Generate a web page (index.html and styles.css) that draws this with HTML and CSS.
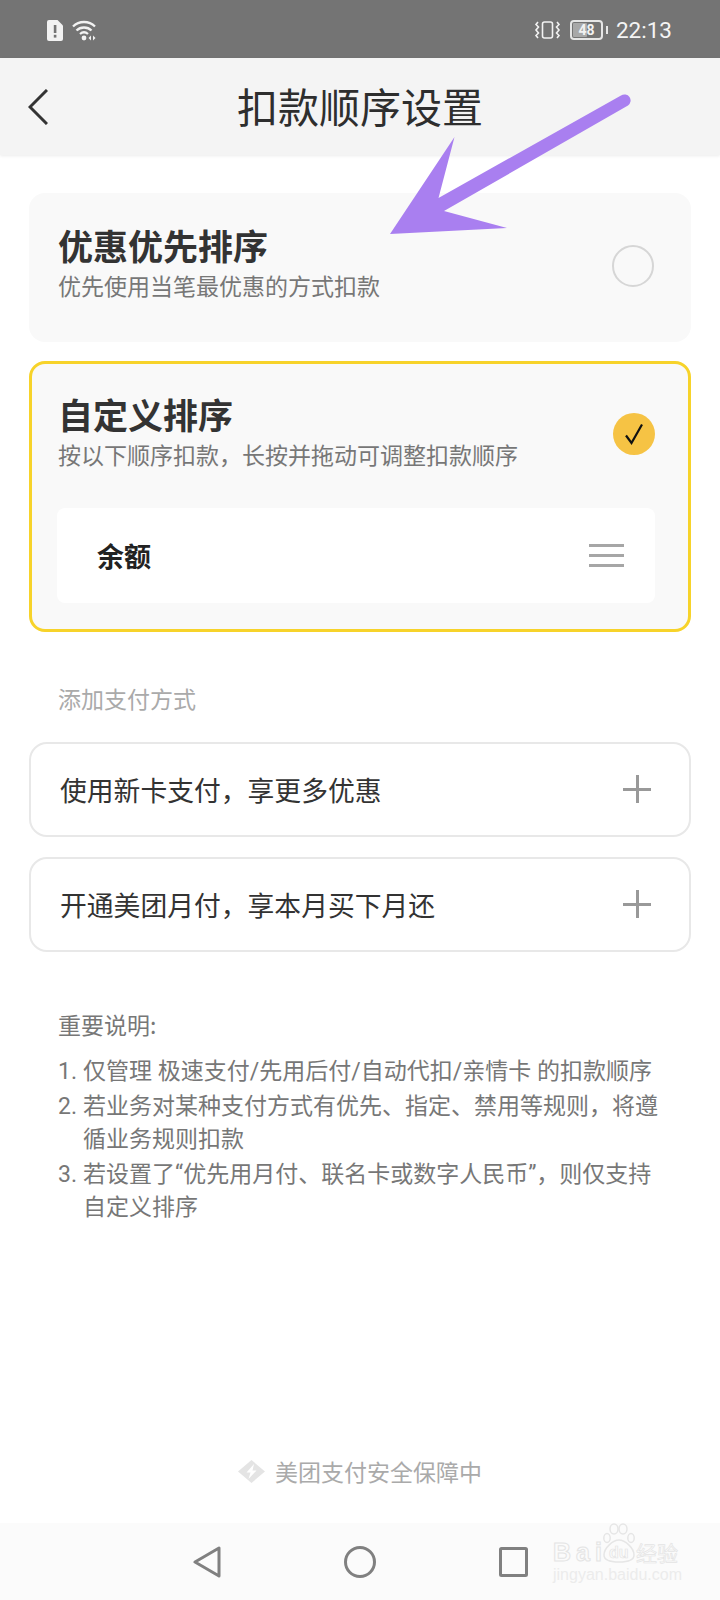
FILE: index.html
```html
<!DOCTYPE html>
<html lang="zh-CN">
<head>
<meta charset="utf-8">
<title>扣款顺序设置</title>
<link rel="stylesheet" href="styles.css">
</head>
<body>
<div class="page">
  <div class="status">
    <div class="status-group">
      <svg class="ic-sim" viewBox="0 0 16 21"><path d="M2 0H10.500L16 5.500V19A2 2 0 0 1 14 21H2A2 2 0 0 1 0 19V2A2 2 0 0 1 2 0Z" fill="#f2f2f2"/><rect x="6.800" y="5" width="2.600" height="8" fill="#747474"/><rect x="6.800" y="14.800" width="2.600" height="2.800" fill="#747474"/></svg>
      <svg class="ic-wifi" viewBox="0 0 25 22" fill="none" stroke="#f2f2f2" stroke-width="2.300"><path d="M1 7.500C7 1.500 17 1.500 23 7.500"/><path d="M4.500 11.500C8.500 7.500 15.500 7.500 19.500 11.500"/><path d="M8 15C10.500 12.800 13.500 12.800 16 15"/><circle cx="12" cy="19" r="2.400" fill="#f2f2f2" stroke="none"/><path d="M19 16.500L16.500 19L19 21.500Z" fill="#f2f2f2" stroke="none"/><path d="M21 16.500L23.500 19L21 21.500Z" fill="#f2f2f2" stroke="none"/></svg>
    </div>
    <div class="status-group status-right">
      <svg class="ic-vib" viewBox="0 0 27 18" fill="none" stroke="#f2f2f2" stroke-width="1.600"><rect x="8.500" y="1" width="10" height="16" rx="2"/><path d="M4 1L2 3.500L4.500 6L2 9L4.500 12L2 14.500L4 17"/><path d="M23 1L25 3.500L22.500 6L25 9L22.500 12L25 14.500L23 17"/></svg>
      <div class="battery"><div class="battery-body"><span class="battery-fill"></span><span class="battery-num">48</span></div><span class="battery-tip"></span></div>
      <span class="time">22:13</span>
    </div>
  </div>

  <header class="header">
    <svg class="back" viewBox="0 0 20 36" fill="none" stroke="#333" stroke-width="3"><path d="M19 1L2 18L19 35"/></svg>
    <h1 class="title">扣款顺序设置</h1>
  </header>

  <main class="main">
    <section class="card card-plain">
      <div class="card-head">
        <div>
          <div class="card-title">优惠优先排序</div>
          <div class="card-sub">优先使用当笔最优惠的方式扣款</div>
        </div>
        <span class="radio"></span>
      </div>
    </section>

    <section class="card card-active">
      <div class="card-head">
        <div>
          <div class="card-title">自定义排序</div>
          <div class="card-sub">按以下顺序扣款，长按并拖动可调整扣款顺序</div>
        </div>
        <span class="radio-on"><svg viewBox="0 0 24 24" fill="none" stroke="#111" stroke-width="2.200"><path d="M4 13.500L9.500 21L20 2.500"/></svg></span>
      </div>
      <div class="pay-item">
        <span class="pay-name">余额</span>
        <span class="handle"><i></i><i></i><i></i></span>
      </div>
    </section>

    <div class="add-label">添加支付方式</div>
    <div class="add-row"><span>使用新卡支付，享更多优惠</span><span class="plus"></span></div>
    <div class="add-row"><span>开通美团月付，享本月买下月还</span><span class="plus"></span></div>

    <div class="notes">
      <div class="notes-title">重要说明:</div>
      <ol class="notes-list">
        <li><span class="num">1.</span><span>仅管理 极速支付/先用后付/自动代扣/亲情卡 的扣款顺序</span></li>
        <li><span class="num">2.</span><span>若业务对某种支付方式有优先、指定、禁用等规则，将遵循业务规则扣款</span></li>
        <li><span class="num">3.</span><span>若设置了“优先用月付、联名卡或数字人民币”，则仅支持自定义排序</span></li>
      </ol>
    </div>
  </main>

  <div class="secure">
    <svg class="shield" viewBox="0 0 27 23"><path d="M13.500 0L27 11.500L13.500 23L0 11.500Z" fill="#e4e4e4"/><path d="M16 4L8.500 12.500H12.500L10.500 19L18.500 10.500H14.500Z" fill="#fff"/></svg>
    <span>美团支付安全保障中</span>
  </div>

  <nav class="nav">
    <svg class="nav-back" viewBox="0 0 28 32" fill="none" stroke="#808080" stroke-width="3" stroke-linejoin="round"><path d="M26 2V30L2 16Z"/></svg>
    <svg class="nav-home" viewBox="0 0 32 32" fill="none" stroke="#808080" stroke-width="3"><circle cx="16" cy="16" r="14.500"/></svg>
    <svg class="nav-recent" viewBox="0 0 29 30" fill="none" stroke="#808080" stroke-width="3" stroke-linejoin="round"><rect x="1.500" y="1.500" width="26" height="27" rx="1"/></svg>
    <div class="watermark">
      <svg class="paw" viewBox="0 0 32 40" fill="none" stroke="#e6e6e6" stroke-width="1.500"><ellipse cx="11" cy="6" rx="4" ry="5"/><ellipse cx="20" cy="6" rx="4" ry="5"/><ellipse cx="4" cy="15" rx="3.200" ry="4.500"/><ellipse cx="28" cy="15" rx="3.200" ry="4.500"/><path d="M16 17C22 17 31 25 31 32C31 38 24 39 16 39C8 39 1 38 1 32C1 25 10 17 16 17Z"/></svg>
      <span class="wm-bai">Bai</span>
      <span class="wm-du">du</span>
      <span class="wm-cn">经验</span>
      <span class="wm-url">jingyan.baidu.com</span>
    </div>
  </nav>

  <svg class="arrow" viewBox="0 0 720 1600"><path d="M390 234L454.500 137L438.500 198L621 95.500A6 6 0 0 1 628 105.500L444 211L507 228Z" fill="#a97ff0"/></svg>
</div>
</body>
</html>
```

FILE: styles.css
```css
* { box-sizing: border-box; }
html, body { margin: 0; padding: 0; background: #fff; }
body { font-family: "Noto Sans CJK SC", "Noto Sans", sans-serif; color: #333; }
.page { position: relative; width: 720px; height: 1600px; display: flex; flex-direction: column; overflow: hidden; }

.status { height: 58px; flex: none; background: #747474; display: flex; justify-content: space-between; align-items: center; padding: 2px 48px 0 47px; color: #f2f2f2; }
.status-group { display: flex; align-items: center; gap: 9px; }
.ic-sim { width: 16px; height: 21px; }
.ic-wifi { width: 25px; height: 22px; }
.ic-vib { width: 27px; height: 18px; }
.battery { display: flex; align-items: center; gap: 3px; }
.battery-body { position: relative; width: 33px; height: 20px; border: 2px solid #e6e6e6; border-radius: 4px; display: flex; align-items: center; justify-content: center; }
.battery-fill { position: absolute; left: 1px; top: 1px; bottom: 1px; width: 14px; background: #a8a8a8; border-radius: 1px; }
.battery-num { position: relative; font: 700 14px/16px "Roboto", sans-serif; color: #f2f2f2; }
.battery-tip { width: 2px; height: 8px; background: #e6e6e6; }
.time { font: 400 22.500px/28px "Roboto", sans-serif; margin-left: -1px; color: #f4f4f4; }

.header { position: relative; height: 97px; flex: none; background: #f4f4f4; display: flex; align-items: center; justify-content: center; box-shadow: 0 1px 3px rgba(0,0,0,.08); z-index: 1; }
.back { position: absolute; left: 28px; top: 31px; width: 20px; height: 36px; }
.title { margin: 0 0 3px; font-size: 41px; line-height: 52px; font-weight: 400; color: #2e2e2e; }

.main { padding: 38px 29px 0; }
.card { border-radius: 16px; background: #f9f9f9; }
.card-plain { height: 149px; padding: 32px 37px 0 29px; }
.card-active { height: 271px; margin-top: 19px; padding: 30px 33px 0 25px; border: 3px solid #f7d32a; }
.card-head { display: flex; justify-content: space-between; align-items: center; }
.card-active .card-head { padding-left: 1px; }
.card-title { font-size: 35px; line-height: 40px; font-weight: 700; color: #333; }
.card-sub { margin-top: 5px; font-size: 23px; line-height: 30px; color: #777; }
.radio { width: 42px; height: 42px; border: 2px solid #d6d6d6; border-radius: 50%; margin-top: 6px; }
.radio-on { width: 42px; height: 42px; border-radius: 50%; background: #f6c344; display: flex; align-items: center; justify-content: center; margin-top: 4px; }
.radio-on svg { width: 24px; height: 24px; }
.pay-item { height: 95px; margin-top: 39px; background: #fff; border-radius: 8px; display: flex; align-items: center; justify-content: space-between; padding: 0 31px 0 40px; }
.pay-name { font-size: 27px; line-height: 36px; font-weight: 700; color: #222; }
.handle { width: 35px; display: flex; flex-direction: column; gap: 7px; }
.handle i { display: block; height: 3px; background: #a6a6a6; }

.add-label { margin-top: 51px; padding-left: 29px; font-size: 23px; line-height: 30px; color: #aaa; }
.add-row { height: 95px; margin-top: 20px; padding: 1px 38px 0 29px; border: 2px solid #e8e8e8; border-radius: 18px; display: flex; align-items: center; justify-content: space-between; font-size: 26.800px; line-height: 36px; color: #333; }
.add-label + .add-row { margin-top: 29px; }
.plus { position: relative; width: 28px; height: 28px; margin-top: -2px; }
.plus::before, .plus::after { content: ""; position: absolute; background: #999; }
.plus::before { left: 0; right: 0; top: 12.500px; height: 3px; }
.plus::after { top: 0; bottom: 0; left: 12.500px; width: 3px; }

.notes { margin-top: 57px; padding-left: 29px; color: #777; font-size: 23px; }
.notes-title { line-height: 30px; }
.notes-list { list-style: none; margin: 16px 0 0; padding: 0; display: flex; flex-direction: column; gap: 2px; font-family: "Roboto", "Noto Sans CJK SC", sans-serif; }
.notes-list li { display: flex; line-height: 33px; width: 604px; }
.num { flex: none; width: 25px; }

.secure { margin-top: auto; height: 100px; padding-bottom: 4px; flex: none; display: flex; align-items: center; justify-content: center; gap: 10px; font-size: 23px; color: #aaa; }
.shield { width: 27px; height: 23px; }

.nav { position: relative; height: 77px; flex: none; background: #fbfbfb; display: flex; align-items: center; justify-content: center; gap: 123px; }
.nav-back { width: 28px; height: 32px; }
.nav-home { width: 32px; height: 32px; }
.nav-recent { width: 29px; height: 30px; }
.watermark { position: absolute; left: 553px; top: 0; width: 130px; height: 77px; font-family: "Liberation Sans", sans-serif; color: transparent; }
.paw { position: absolute; left: 50px; top: 0; width: 32px; height: 40px; }
.wm-bai, .wm-du, .wm-cn, .wm-url { position: absolute; white-space: nowrap; }
.wm-bai { left: 0; top: 14px; font-size: 25px; line-height: 30px; font-weight: 700; letter-spacing: 5px; -webkit-text-stroke: 1px #e4e4e4; }
.wm-du { left: 56px; top: 20px; font-size: 16px; line-height: 20px; font-weight: 700; -webkit-text-stroke: .7px #e4e4e4; }
.wm-cn { left: 83px; top: 15px; font-family: "Noto Sans CJK SC", sans-serif; font-size: 21px; line-height: 28px; -webkit-text-stroke: .7px #e4e4e4; }
.wm-url { left: 0; top: 42px; font-size: 16px; line-height: 20px; color: #ececec; }

.arrow { position: absolute; left: 0; top: 0; width: 720px; height: 1600px; z-index: 2; pointer-events: none; }
```
